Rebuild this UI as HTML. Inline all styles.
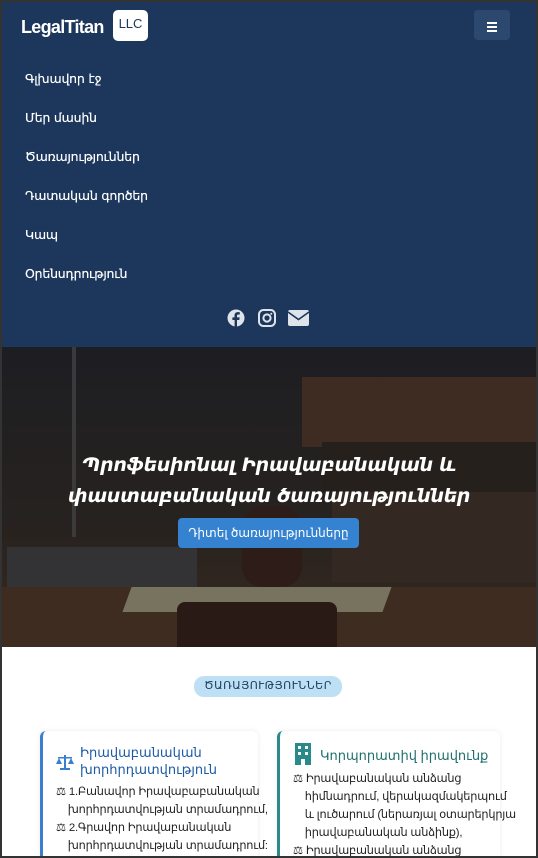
<!DOCTYPE html>
<html><head><meta charset="utf-8"><style>
*{margin:0;padding:0;box-sizing:border-box}
html,body{width:538px;height:858px;overflow:hidden;background:#333}
body{font-family:"Liberation Sans","DejaVu Sans",sans-serif;position:relative}
#wrap{position:absolute;left:2px;top:2px;width:534px;height:854px;background:#fff;overflow:hidden}
nav{position:absolute;left:0;top:0;width:534px;height:345px;background:#1c365c;color:#fff}
.logo{position:absolute;left:19px;top:15px;font-weight:bold;font-size:18px;letter-spacing:-0.7px}
.llc{position:absolute;left:111px;top:8px;width:35px;height:31px;background:#fff;color:#1c365c;border-radius:5px;font-size:13px;font-weight:normal;text-align:center;line-height:28px}
.burger{position:absolute;left:472px;top:8px;width:36px;height:30px;background:#2d486e;border-radius:4px}
.burger i{position:absolute;left:13px;width:10px;height:2px;background:#fff}
.menu a{position:absolute;left:23px;color:#fff;text-decoration:none;font-family:"DejaVu Sans",sans-serif;font-size:12.5px;letter-spacing:-0.2px;text-shadow:0 0 0.4px #fff}
.hero{position:absolute;left:0;top:345px;width:534px;height:300px;background:linear-gradient(180deg,#1d1e22 0%,#27221f 60%,#3a2a20 100%);overflow:hidden}
.hero div{position:absolute}
h1{position:absolute;left:0;width:534px;top:103px;text-align:center;color:#fff;font-style:italic;font-weight:bold;font-size:19px;line-height:31px;font-family:"DejaVu Sans",sans-serif;letter-spacing:-0.3px}
.btn{position:absolute;left:176px;top:171px;width:181px;height:30px;background:#3582d0;border-radius:4px;color:#fff;font-size:12px;text-align:center;line-height:30px}
.pill{position:absolute;left:192px;top:674px;width:148px;height:21px;background:#bde0f5;border-radius:10px;color:#1c365c;font-size:11px;text-align:center;line-height:21px;letter-spacing:.5px}
.card{position:absolute;top:729px;height:130px;background:#fff;border-radius:6px;box-shadow:0 0 6px rgba(0,0,0,.08)}
.card h3{position:absolute;font-size:13px;font-weight:normal;line-height:17px;white-space:nowrap}
.card p{position:absolute;font-size:11.3px;line-height:18px;color:#222;white-space:nowrap;letter-spacing:-0.2px}
</style></head><body><div id="wrap">
<nav>
<div class="logo">LegalTitan</div><div class="llc">LLC</div>
<div class="burger"><i style="top:12px"></i><i style="top:16px"></i><i style="top:20px"></i></div>
<div class="menu">
<a style="top:69px">Գլխավոր էջ</a>
<a style="top:108px">Մեր մասին</a>
<a style="top:147px">Ծառայություններ</a>
<a style="top:186px">Դատական գործեր</a>
<a style="top:225px">Կապ</a>
<a style="top:264px">Օրենսդրություն</a>
</div>
<svg style="position:absolute;left:224px;top:306px" width="86" height="20" viewBox="0 0 86 20" fill="#dfe3ea">
<circle cx="10" cy="10" r="8.5"/><path d="M11 19V12h2.3l.4-2.6H11V7.8c0-.8.3-1.3 1.4-1.3h1.4V4.2c-.3 0-1.1-.1-2-.1-2 0-3.3 1.2-3.3 3.4v1.9H6.4V12h2.2v7z" fill="#1c365c"/>
<rect x="33" y="2" width="16" height="16" rx="4.5" fill="none" stroke="#dfe3ea" stroke-width="2"/><circle cx="41" cy="10" r="3.6" fill="none" stroke="#dfe3ea" stroke-width="2"/><circle cx="45.3" cy="5.7" r="1"/>
<rect x="62" y="2" width="21" height="16" rx="2"/><path d="M62 4l10.5 7.5L83 4" fill="none" stroke="#1c365c" stroke-width="1.6"/>
</svg>
</nav>
<div class="hero">
<div style="left:300px;top:30px;width:234px;height:70px;background:#3e2b22"></div>
<div style="left:320px;top:95px;width:214px;height:50px;background:#26201c"></div>
<div style="left:330px;top:145px;width:204px;height:90px;background:#332822"></div>
<div style="left:5px;top:200px;width:190px;height:50px;background:#333335"></div>
<div style="left:0;top:240px;width:534px;height:60px;background:#3e2c21"></div>
<div style="left:125px;top:240px;width:260px;height:25px;background:#77735f;transform:skewX(-20deg)"></div>
<div style="left:175px;top:255px;width:160px;height:45px;background:#2a1a16;border-radius:8px 8px 0 0"></div>
<div style="left:240px;top:160px;width:60px;height:80px;background:#2e1c18;border-radius:20px"></div>
<div style="left:70px;top:0;width:4px;height:190px;background:#3a3a3a"></div>
<h1>Պրոֆեսիոնալ Իրավաբանական և<br>փաստաբանական ծառայություններ</h1>
<div class="btn">Դիտել ծառայությունները</div>
</div>
<div class="pill">ԾԱՌԱՅՈՒԹՅՈՒՆՆԵՐ</div>
<div class="card" style="left:38px;width:218px;border-left:3px solid #3a7fcf">
<svg style="position:absolute;left:13px;top:23px" width="18" height="16" viewBox="0 0 18 16" fill="#3a7fcf"><rect x="8" y="1" width="2" height="13"/><rect x="2" y="3" width="14" height="1.5"/><rect x="4" y="14" width="10" height="2"/><path d="M0 10h6L3 4zM12 10h6l-3-6z"/></svg>
<h3 style="left:37px;top:13px;color:#1c5aa6">Իրավաբանական<br>խորհրդատվություն</h3>
<p style="left:13px;top:52px;width:200px">⚖ 1.Բանավոր Իրավաբաբանական<br>&nbsp;&nbsp;&nbsp;&nbsp;խորհրդատվության տրամադրում,<br>⚖ 2.Գրավոր Իրավաբանական<br>&nbsp;&nbsp;&nbsp;&nbsp;խորհրդատվության տրամադրում:</p>
</div>
<div class="card" style="left:275px;width:223px;border-left:3px solid #2a8a8a">
<svg style="position:absolute;left:15px;top:12px" width="16" height="22" viewBox="0 0 16 22"><rect width="16" height="22" fill="#2a8a8a"/><g fill="#fff"><rect x="3" y="3" width="3" height="3"/><rect x="10" y="3" width="3" height="3"/><rect x="3" y="9" width="3" height="3"/><rect x="10" y="9" width="3" height="3"/><rect x="6" y="16" width="4" height="6"/></g></svg>
<h3 style="left:40px;top:16px;color:#1f6f6f">Կորպորատիվ իրավունք</h3>
<p style="left:13px;top:39px;width:205px">⚖ Իրավաբանական անձանց<br>&nbsp;&nbsp;&nbsp;&nbsp;հիմնադրում, վերակազմակերպում<br>&nbsp;&nbsp;&nbsp;&nbsp;և լուծարում (ներառյալ օտարերկրյա<br>&nbsp;&nbsp;&nbsp;&nbsp;իրավաբանական անձինք),<br>⚖ Իրավաբանական անձանց</p>
</div>
</div></body></html>
